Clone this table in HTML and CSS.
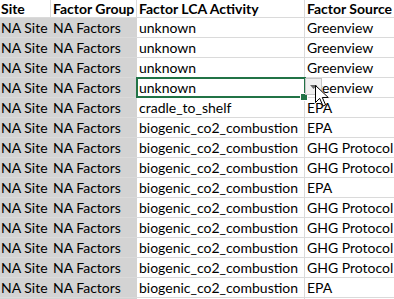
FILE: index.html
```html
<!DOCTYPE html>
<html>
<head>
<meta charset="utf-8">
<link rel="stylesheet" href="styles.css">
</head>
<body>
<div class="sheet">
  <div class="row head">
    <div class="c a">Site</div><div class="c b">Factor Group</div><div class="c cc">Factor LCA Activity</div><div class="c d">Factor Source</div>
  </div>
  <div class="row"><div class="c a g">NA Site</div><div class="c b g">NA Factors</div><div class="c cc">unknown</div><div class="c d">Greenview</div></div>
  <div class="row"><div class="c a g">NA Site</div><div class="c b g">NA Factors</div><div class="c cc">unknown</div><div class="c d">Greenview</div></div>
  <div class="row"><div class="c a g">NA Site</div><div class="c b g">NA Factors</div><div class="c cc">unknown</div><div class="c d">Greenview</div></div>
  <div class="row"><div class="c a g">NA Site</div><div class="c b g">NA Factors</div><div class="c cc sel">unknown<span class="handle"></span><span class="dd"><svg width="7" height="4" viewBox="0 0 7 4"><path d="M0 0h7L3.5 4z" fill="#666"/></svg></span><svg class="cursor" width="14" height="23" viewBox="0 0 14 23"><path d="M0.5 0.5v17l4.2-4.2 3.3 7.7 2.6-1.1-3.3-7.4h6z" fill="#fff" stroke="#000" stroke-width="1" stroke-linejoin="miter"/></svg></div><div class="c d">Greenview</div></div>
  <div class="row"><div class="c a g">NA Site</div><div class="c b g">NA Factors</div><div class="c cc">cradle_to_shelf</div><div class="c d">EPA</div></div>
  <div class="row"><div class="c a g">NA Site</div><div class="c b g">NA Factors</div><div class="c cc">biogenic_co2_combustion</div><div class="c d">EPA</div></div>
  <div class="row"><div class="c a g">NA Site</div><div class="c b g">NA Factors</div><div class="c cc">biogenic_co2_combustion</div><div class="c d">GHG Protocol</div></div>
  <div class="row"><div class="c a g">NA Site</div><div class="c b g">NA Factors</div><div class="c cc">biogenic_co2_combustion</div><div class="c d">GHG Protocol</div></div>
  <div class="row"><div class="c a g">NA Site</div><div class="c b g">NA Factors</div><div class="c cc">biogenic_co2_combustion</div><div class="c d">EPA</div></div>
  <div class="row"><div class="c a g">NA Site</div><div class="c b g">NA Factors</div><div class="c cc">biogenic_co2_combustion</div><div class="c d">GHG Protocol</div></div>
  <div class="row"><div class="c a g">NA Site</div><div class="c b g">NA Factors</div><div class="c cc">biogenic_co2_combustion</div><div class="c d">GHG Protocol</div></div>
  <div class="row"><div class="c a g">NA Site</div><div class="c b g">NA Factors</div><div class="c cc">biogenic_co2_combustion</div><div class="c d">GHG Protocol</div></div>
  <div class="row"><div class="c a g">NA Site</div><div class="c b g">NA Factors</div><div class="c cc">biogenic_co2_combustion</div><div class="c d">GHG Protocol</div></div>
  <div class="row"><div class="c a g">NA Site</div><div class="c b g">NA Factors</div><div class="c cc">biogenic_co2_combustion</div><div class="c d">EPA</div></div>
  <div class="row last"><div class="c a g"></div><div class="c b g"></div><div class="c cc"></div><div class="c d"></div></div>
</div>
</body>
</html>
```
FILE: styles.css
```css
html, body { margin: 0; padding: 0; background: #fff; }
body { width: 394px; height: 299px; overflow: hidden; }
.sheet {
  font-family: Lato, "Open Sans", sans-serif;
  font-size: 14px;
  color: #000;
  display: flex;
  flex-direction: column;
}
.row {
  display: grid;
  grid-template-columns: 51px 86px 168px 89px;
  height: 20px;
  box-sizing: border-box;
  border-bottom: 1px solid #dadada;
}
.row.last { height: 2px; border-bottom: 0; }
.row.head { height: 18px; }
.head .c { font-weight: bold; line-height: 17px; }
.c {
  box-sizing: border-box;
  padding-left: 2px;
  line-height: 19px;
  white-space: nowrap;
  border-right: 1px solid #dadada;
  position: relative;
}
.c.d { border-right: 0; }
.c.g { background: #d3d3d3; border-right-color: #d3d3d3; }
.c.a.g { padding-left: 1px; }
.head .c.a { padding-left: 1px; }
.sel { outline: 2px solid #217346; outline-offset: -1px; z-index: 2; }
.handle {
  position: absolute; right: -4px; bottom: -4px;
  width: 6px; height: 6px; background: #217346; border: 1px solid #fff;
}
.dd {
  position: absolute; left: 168px; top: 0px;
  width: 17px; height: 17px; box-sizing: border-box;
  background: #f0f0f0; border: 1px solid #c6c6c6;
  display: flex; align-items: center; justify-content: center;
}
.cursor { position: absolute; left: 178px; top: 7px; z-index: 3; }
```
